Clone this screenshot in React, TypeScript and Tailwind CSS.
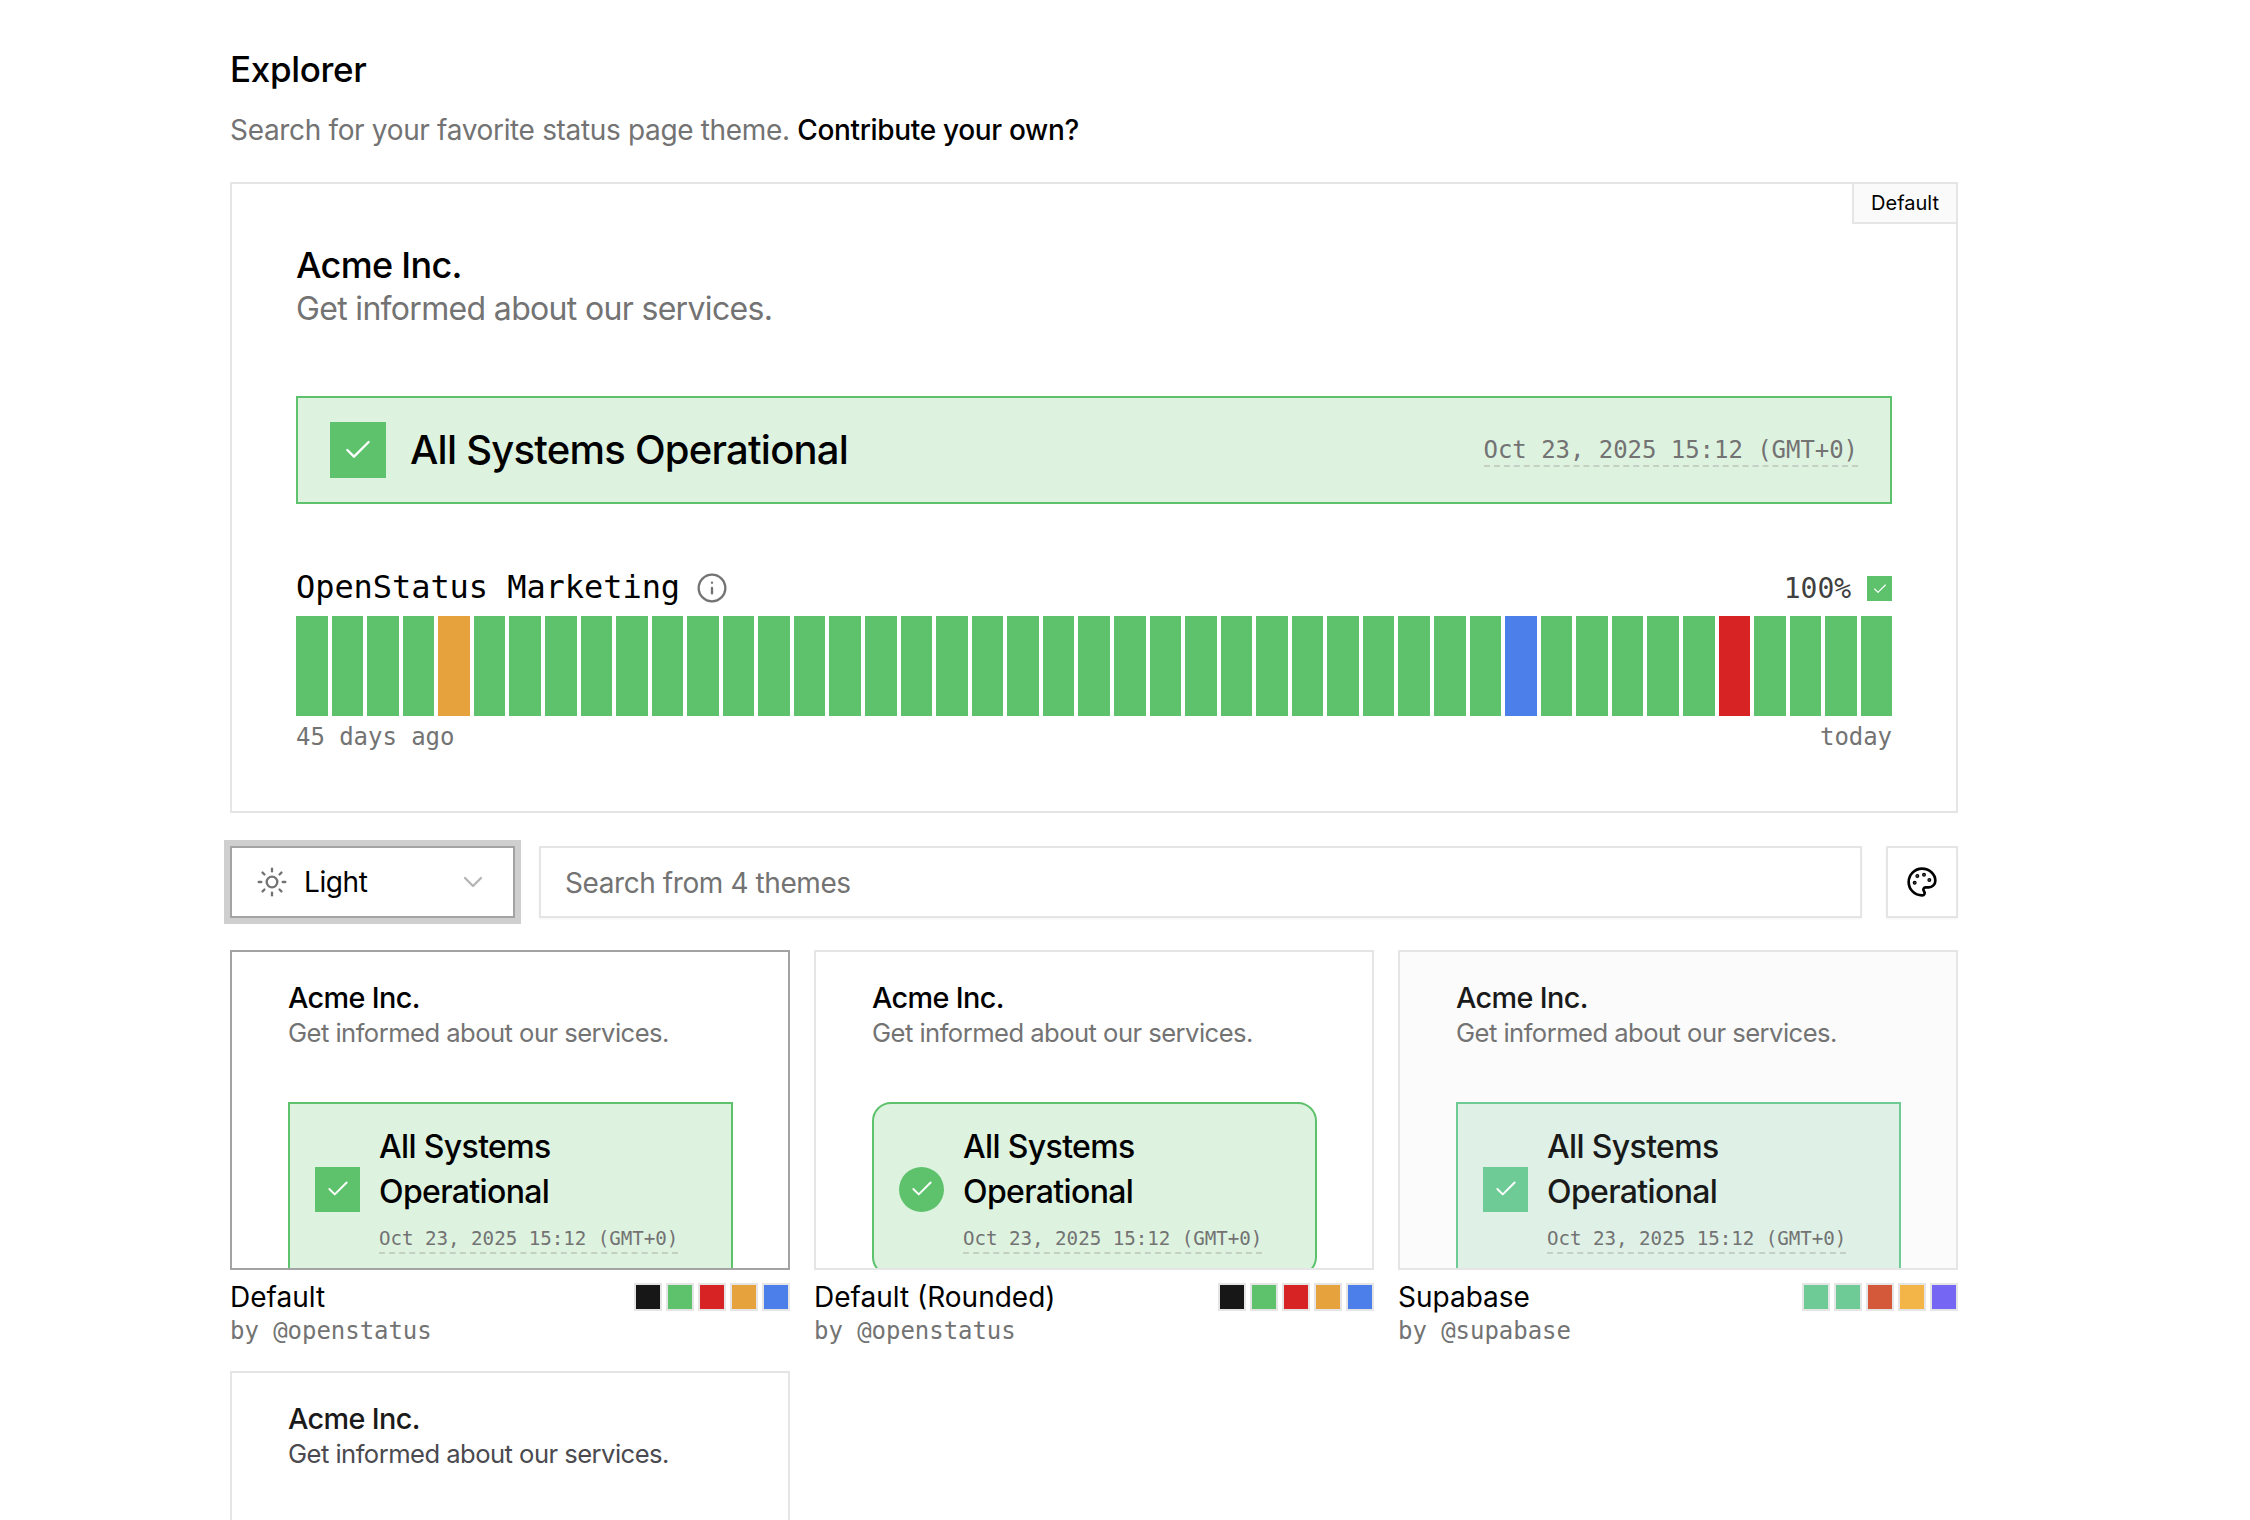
import { Check, ChevronDown, Info, Palette, Sun } from "lucide-react";

const MONO = "font-['DejaVu_Sans_Mono',monospace]";

const THEMES = [
  {
    name: "Default",
    author: "@openstatus",
    swatches: ["#171717", "#5ec26d", "#d72323", "#e6a23c", "#4c7fea"],
    selected: true,
    rounded: false,
    supabase: false,
  },
  {
    name: "Default (Rounded)",
    author: "@openstatus",
    swatches: ["#171717", "#5ec26d", "#d72323", "#e6a23c", "#4c7fea"],
    selected: false,
    rounded: true,
    supabase: false,
  },
  {
    name: "Supabase",
    author: "@supabase",
    swatches: ["#6ecb96", "#6ecb96", "#d3593a", "#f3b548", "#7567f4"],
    selected: false,
    rounded: false,
    supabase: true,
  },
];

// 45 days, most of them fine
function barColor(i: number) {
  if (i === 4) return "#e6a23c";
  if (i === 34) return "#4c7fea";
  if (i === 40) return "#d72323";
  return "#5ec26d";
}

function ThemePreview({ rounded, supabase }: { rounded: boolean; supabase: boolean }) {
  return (
    <div className={`flex h-full flex-col overflow-hidden pt-[30px] pr-[55px] pl-[56px] ${supabase ? "bg-[#fbfbfb] text-[#1a1a1a]" : "bg-white text-black"}`}>
      <h3 className="text-[28.8px] leading-[32px] font-medium tracking-[-0.022em]">Acme Inc.</h3>
      <p className="text-[25.6px] leading-[38px] tracking-[-0.021em] text-[#737373]">Get informed about our services.</p>
      <div
        className={`mt-[50px] flex shrink-0 items-center gap-[19px] border-2 pt-[20px] pr-[25px] pb-[20px] pl-[25px] ${
          supabase ? "border-[#6ecb96] bg-[#dff1e7]" : "border-[#5ec26d] bg-[#def2e0]"
        } ${rounded ? "rounded-[19px]" : ""}`}
      >
        <div
          className={`flex h-[45px] w-[45px] shrink-0 items-center justify-center text-white ${
            supabase ? "bg-[#6ecb96]" : "bg-[#5ec26d]"
          } ${rounded ? "rounded-full" : ""}`}
        >
          <Check size={26} strokeWidth={1.75} />
        </div>
        <div className="flex flex-col items-start">
          <div className="text-[32px] leading-[45px] font-medium tracking-[-0.02em]">
            All Systems
            <br />
            Operational
          </div>
          <span className={`mt-[12px] border-b-2 border-dashed border-[#c4d0c4] text-[19.2px] leading-[26px] tracking-[-0.002em] text-[#737373] ${MONO}`}>
            Oct 23, 2025 15:12 (GMT+0)
          </span>
        </div>
      </div>
    </div>
  );
}

export default function App() {
  return (
    <div className="h-[1520px] overflow-hidden bg-white font-['Inter',sans-serif] text-black">
      <div className="ml-[230px] w-[1728px] pt-[45px]">
        <h1 className="text-[35px] leading-[48px] font-medium tracking-[-0.01em]">Explorer</h1>
        <p className="mt-[17px] text-[28px] leading-[40px] tracking-[-0.012em] text-[#737373]">
          Search for your favorite status page theme. <span className="font-medium text-black">Contribute your own?</span>
        </p>

        <section className="relative mt-[32px] h-[631px] border-2 border-[#e5e5e5] px-[64px] pt-[61px]">
          <div className="absolute top-0 right-0 flex h-[40px] w-[104px] items-center justify-center border-b-2 border-l-2 border-[#e5e5e5] bg-[#fafafa] text-[20px]">
            Default
          </div>
          <h2 className="text-[36px] leading-[40px] font-medium tracking-[-0.019em]">Acme Inc.</h2>
          <p className="text-[32px] leading-[48px] tracking-[-0.021em] text-[#737373]">Get informed about our services.</p>

          <div className="mt-[63px] flex h-[108px] items-center justify-between border-2 border-[#5ec26d] bg-[#def2e0] px-[32px]">
            <div className="flex items-center gap-[24px]">
              <div className="flex h-[56px] w-[56px] items-center justify-center bg-[#5ec26d] text-white">
                <Check size={32} strokeWidth={1.75} />
              </div>
              <span className="text-[40px] leading-[56px] font-medium tracking-[-0.019em]">All Systems Operational</span>
            </div>
            <span className={`border-b-2 border-dashed border-[#c4d0c4] pt-[2px] text-[24px] leading-[30px] tracking-[-0.002em] text-[#737373] ${MONO}`}>
              Oct 23, 2025 15:12 (GMT+0)
            </span>
          </div>

          <div className="mt-[59px] flex h-[48px] items-center justify-between">
            <div className="flex items-center gap-[16px]">
              <span className={`text-[32px] leading-[48px] tracking-[-0.002em] ${MONO}`}>OpenStatus Marketing</span>
              <Info size={32} strokeWidth={1.75} className="mt-[1px] text-[#737373]" />
            </div>
            <div className="mt-[3px] flex items-center gap-[16px]">
              <span className={`text-[28px] leading-[40px] tracking-[-0.002em] text-[#404040] ${MONO}`}>100%</span>
              <div className="flex h-[25px] w-[25px] items-center justify-center bg-[#5ec26d] text-white">
                <Check size={16} strokeWidth={1.75} />
              </div>
            </div>
          </div>
          <div className="mt-[5px] flex h-[100px] gap-[4px]">
            {Array.from({ length: 45 }).map((_, i) => (
              <div key={i} className="flex-1" style={{ backgroundColor: barColor(i) }} />
            ))}
          </div>
          <div className={`mt-[5px] flex justify-between text-[24px] leading-[32px] tracking-[-0.002em] text-[#737373] ${MONO}`}>
            <span>45 days ago</span>
            <span>today</span>
          </div>
        </section>

        <div className="mt-[33px] flex h-[72px] gap-[24px]">
          <div className="flex w-[285px] items-center border-2 border-[#a3a3a3] px-[24px] shadow-[0_0_0_6px_#cfcfcf]">
            <Sun size={32} strokeWidth={1.75} className="text-[#737373]" />
            <span className="ml-[16px] text-[28px] tracking-[-0.014em]">Light</span>
            <ChevronDown size={32} strokeWidth={1.75} className="ml-auto text-[#b5b5b5]" />
          </div>
          <div className="flex flex-1 items-center border-2 border-[#e5e5e5] px-[24px] pt-[2px] text-[28px] tracking-[-0.015em] text-[#737373] shadow-xs">
            Search from 4 themes
          </div>
          <div className="flex w-[72px] items-center justify-center border-2 border-[#e5e5e5] shadow-xs">
            <Palette size={32} strokeWidth={2} />
          </div>
        </div>

        <div className="mt-[32px] grid grid-cols-3 gap-x-[24px] gap-y-[24px]">
          {THEMES.map((t) => (
            <div key={t.name}>
              <div className={`h-[320px] border-2 ${t.selected ? "border-[#a3a3a3]" : "border-[#e5e5e5]"}`}>
                <ThemePreview rounded={t.rounded} supabase={t.supabase} />
              </div>
              <div className="mt-[13px] flex items-start justify-between">
                <span className="text-[28px] leading-[28px]">{t.name}</span>
                <div className="flex gap-[4px]">
                  {t.swatches.map((c, i) => (
                    <div key={i} className="h-[28px] w-[28px] border-2 border-[#e5e5e5]" style={{ backgroundColor: c }} />
                  ))}
                </div>
              </div>
              <div className={`mt-[4px] text-[24px] leading-[32px] tracking-[-0.002em] text-[#737373] ${MONO}`}>by {t.author}</div>
            </div>
          ))}
          <div className="h-[320px] border-2 border-[#e5e5e5] px-[56px] pt-[30px] text-[#1a1a1a]">
            <h3 className="text-[28.8px] leading-[32px] font-medium tracking-[-0.022em]">Acme Inc.</h3>
            <p className="text-[25.6px] leading-[38px] tracking-[-0.021em] text-[#4a4a4f]">Get informed about our services.</p>
          </div>
        </div>
      </div>
    </div>
  );
}
